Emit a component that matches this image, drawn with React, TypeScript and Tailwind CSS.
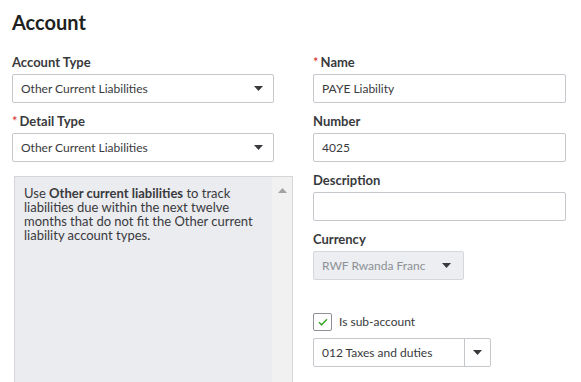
import React from 'react';

const font = { fontFamily: 'Lato, "Open Sans", sans-serif' };

const Caret = () => (
  <svg width="9" height="5" viewBox="0 0 9 5" className="shrink-0">
    <path d="M0 0h9L4.5 5z" fill="#393a3d" />
  </svg>
);

const Label: React.FC<{ text: string; required?: boolean }> = ({ text, required }) => (
  <div className="h-[18px] mb-[3px] text-[13px] leading-[18px] font-bold text-[#393a3d]">
    {required && <span className="text-[#d52b1e] mr-[2px] font-normal">*</span>}
    {text}
  </div>
);

const SelectBox: React.FC<{ value: string }> = ({ value }) => (
  <div className="h-[29px] flex items-center justify-between pl-[8px] pr-[10px] border border-[#c4c7cc] rounded-[2px] bg-white text-[12px] text-[#393a3d]">
    <span>{value}</span>
    <Caret />
  </div>
);

const TextBox: React.FC<{ value?: string }> = ({ value }) => (
  <div className="h-[29px] flex items-center pl-[8px] border border-[#c4c7cc] rounded-[2px] bg-white text-[12px] text-[#393a3d]">
    {value}
  </div>
);

const App: React.FC = () => {
  return (
    <div className="w-[581px] h-[382px] overflow-hidden bg-white pl-[12px] pt-[9px]" style={font}>
      <h1 className="text-[20px] leading-[26px] font-bold text-[#1f1f21] mb-[18px]">Account</h1>

      <div className="flex gap-[39px]">
        {/* Left column */}
        <div className="w-[262px]">
          <Label text="Account Type" />
          <SelectBox value="Other Current Liabilities" />
          <div className="h-[9px]" />
          <Label text="Detail Type" required />
          <SelectBox value="Other Current Liabilities" />

          <div className="mt-[14px] ml-[2px] w-[279px] h-[220px] flex border border-[#d4d6da] bg-[#ebecf0]">
            <div className="flex-1 pl-[9px] pr-[14px] pt-[9px] text-[13px] leading-[14px] text-[#393a3d]">
              <span>Use </span>
              <b className="font-bold">Other current liabilities</b>
              <span> to track liabilities due within the next twelve months that do not fit the Other current liability account types.</span>
            </div>
            <div className="w-[20px] shrink-0 bg-[#f1f1f1] flex justify-center pt-[11px]">
              <svg width="9" height="5" viewBox="0 0 9 5">
                <path d="M0 5h9L4.5 0z" fill="#a3a3a3" />
              </svg>
            </div>
          </div>
        </div>

        {/* Right column */}
        <div className="w-[253px]">
          <Label text="Name" required />
          <TextBox value="PAYE Liability" />
          <div className="h-[9px]" />
          <Label text="Number" />
          <TextBox value="4025" />
          <div className="h-[9px]" />
          <Label text="Description" />
          <TextBox />
          <div className="h-[9px]" />
          <Label text="Currency" />
          <div className="w-[151px] h-[29px] flex items-center justify-between pl-[8px] pr-[12px] border border-[#d4d7dc] rounded-[2px] bg-[#eceef1] text-[12px] text-[#8d9096]">
            <span>RWF Rwanda Franc</span>
            <Caret />
          </div>

          <div className="mt-[33px] flex items-center gap-[7px]">
            <div className="w-[19px] h-[18px] border border-[#8d9096] rounded-[2px] flex items-center justify-center bg-white">
              <svg width="10" height="8" viewBox="0 0 10 8">
                <path d="M1 4.2l2.6 2.6L9 1.2" fill="none" stroke="#2ca01c" strokeWidth="1.3" />
              </svg>
            </div>
            <span className="text-[12px] text-[#393a3d]">Is sub-account</span>
          </div>

          <div className="mt-[7px] w-[178px] h-[29px] flex border border-[#c4c7cc] rounded-[2px] bg-white text-[12px] text-[#393a3d]">
            <div className="flex-1 flex items-center pl-[8px] border-r border-[#c4c7cc]">012 Taxes and duties</div>
            <div className="w-[25px] flex items-center justify-center">
              <Caret />
            </div>
          </div>
        </div>
      </div>
    </div>
  );
};

export default App;
